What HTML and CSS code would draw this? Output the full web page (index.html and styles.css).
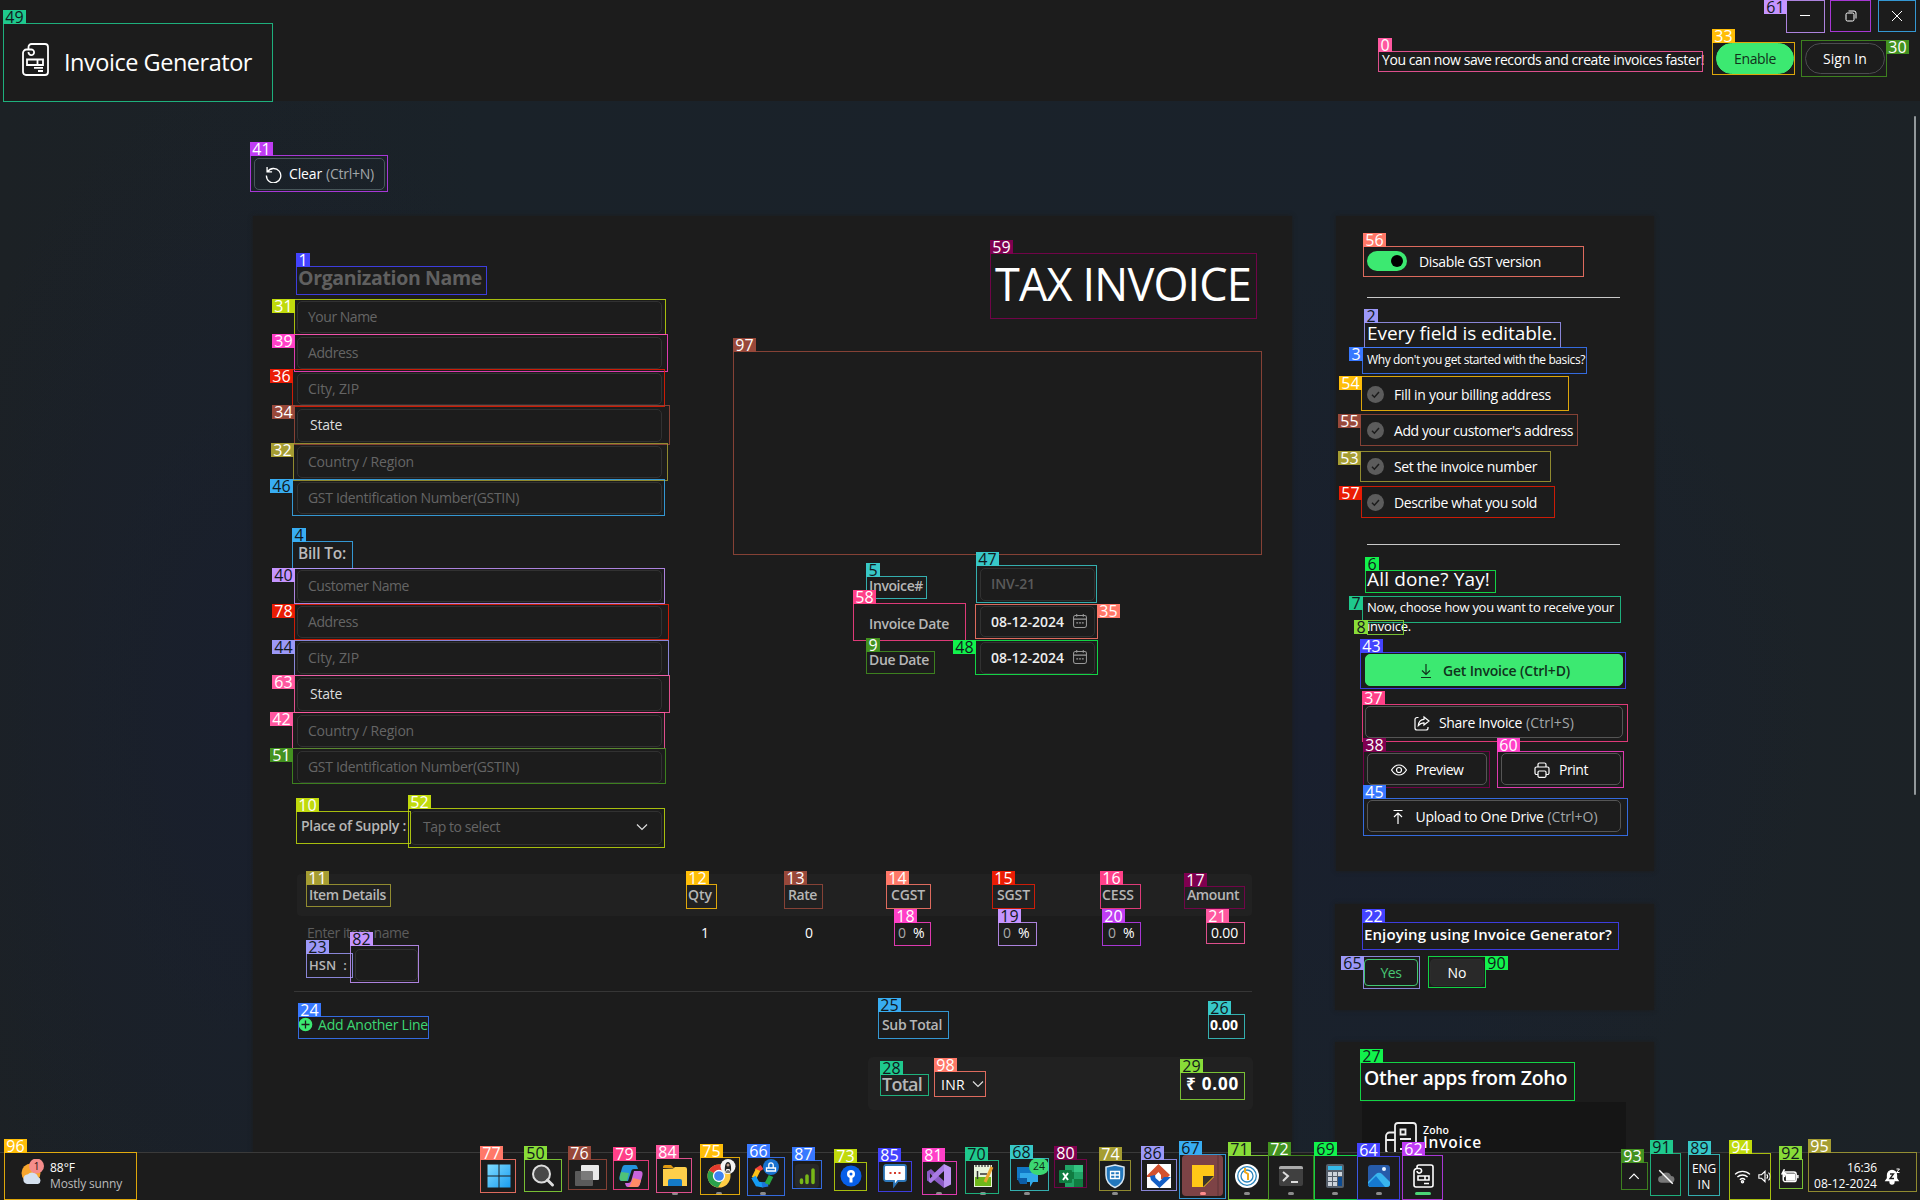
FILE: index.html
```html
<!DOCTYPE html>
<html lang="en">
<head>
<meta charset="utf-8">
<title>Invoice Generator</title>
<link rel="stylesheet" href="styles.css">
</head>
<body>
<header class="header">
  <svg class="logo" viewBox="0 0 27 33" fill="none" stroke="#fff" stroke-width="1.8"><path d="M6.500 7V4a3 3 0 0 1 3-3H23a3 3 0 0 1 3 3v25a3 3 0 0 1-3 3H4a3 3 0 0 1-3-3V10a3.500 3.500 0 0 1 3.500-3.500H9a2.800 2.800 0 1 1-2.500 2.500"/><path d="M5 16.500h16v5.500H5zM15.500 16.500v5.500M12 24.800h9M16 28h5"/></svg>
  <span class="brand" data-width="187">Invoice Generator</span>
  <div class="account">
    <span class="notice" data-width="321">You can now save records and create invoices faster!</span>
    <button class="pill pill-on"><span data-width="41">Enable</span></button>
    <button class="pill"><span data-width="43">Sign In</span></button>
  </div>
  <div class="window-buttons">
    <svg viewBox="0 0 12 12"><path d="M1 5.500h10"/></svg>
    <svg viewBox="0 0 12 12"><rect x="1" y="3" width="8" height="8" rx="1.500"/><path d="M3.500 1H9a2 2 0 0 1 2 2v5.500"/></svg>
    <svg viewBox="0 0 12 12"><path d="M1 1l10 10M11 1L1 11"/></svg>
  </div>
</header>

<main class="workspace">
  <div class="scrollbar"></div>
  <button class="button clear"><svg class="ico" viewBox="0 0 18 18"><path d="M2.200 1v5.300h5.300M2.600 6.300A7.600 7.600 0 1 1 1.500 10"/></svg><span data-width="32">Clear</span><span class="hint" data-width="47">(Ctrl+N)</span></button>
  <div class="columns">
    <section class="paper">
      <div class="upper">
        <div class="party">
          <div class="org"><span data-width="183">Organization Name</span></div>
          <div class="fields">
            <div class="field"><span data-width="68">Your Name</span></div>
            <div class="field"><span data-width="49">Address</span></div>
            <div class="field"><span data-width="50">City, ZIP</span></div>
            <div class="field state"><span data-width="31">State</span></div>
            <div class="field"><span data-width="105">Country / Region</span></div>
            <div class="field"><span data-width="210">GST Identification Number(GSTIN)</span></div>
          </div>
          <div class="bill"><span data-width="47">Bill To:</span></div>
          <div class="fields">
            <div class="field"><span data-width="100">Customer Name</span></div>
            <div class="field"><span data-width="49">Address</span></div>
            <div class="field"><span data-width="50">City, ZIP</span></div>
            <div class="field state"><span data-width="31">State</span></div>
            <div class="field"><span data-width="105">Country / Region</span></div>
            <div class="field"><span data-width="210">GST Identification Number(GSTIN)</span></div>
          </div>
          <div class="supply">
            <span class="label" data-width="104">Place of Supply :</span>
            <div class="select"><span data-width="76">Tap to select</span><svg class="chev" viewBox="0 0 12 8"><path d="M1 1.500l5 5 5-5"/></svg></div>
          </div>
        </div>
        <div class="summary">
          <h1 class="title"><span data-width="255">TAX INVOICE</span></h1>
          <div class="meta">
            <span class="label" data-width="53">Invoice#</span><div class="field number"><span data-width="43">INV-21</span></div>
            <span class="label" data-width="79">Invoice Date</span><div class="field date"><span data-width="72">08-12-2024</span><svg class="cal" viewBox="0 0 15 15"><rect x=".6" y="1.600" width="13.800" height="12.800" rx="2"/><path d="M.6 5.500h13.800M4 0v3M11 0v3M3.500 9.500h2M6.500 9.500h2M9.500 9.500h2"/></svg></div>
            <span class="label" data-width="59">Due Date</span><div class="field date"><span data-width="72">08-12-2024</span><svg class="cal" viewBox="0 0 15 15"><rect x=".6" y="1.600" width="13.800" height="12.800" rx="2"/><path d="M.6 5.500h13.800M4 0v3M11 0v3M3.500 9.500h2M6.500 9.500h2M9.500 9.500h2"/></svg></div>
          </div>
        </div>
      </div>
      <div class="table-head label">
        <span><i data-width="76">Item Details</i></span><span><i data-width="23">Qty</i></span><span><i data-width="28">Rate</i></span><span><i data-width="33">CGST</i></span><span><i data-width="32">SGST</i></span><span><i data-width="31">CESS</i></span><span><i data-width="51">Amount</i></span>
      </div>
      <div class="table-row">
        <span class="muted"><i data-width="101">Enter item name</i></span><span>1</span><span>0</span><span><b>0</b>%</span><span><b>0</b>%</span><span><b>0</b>%</span><span><i data-width="26">0.00</i></span>
      </div>
      <div class="hsn"><span class="label" data-width="37">HSN&nbsp; :</span><div class="field"></div></div>
      <div class="totals">
        <div class="add"><svg viewBox="0 0 15 15"><circle cx="7.500" cy="7.500" r="7.500"/><path d="M7.500 3.500v8M3.500 7.500h8"/></svg><span data-width="109">Add Another Line</span></div>
        <div class="sub label"><span data-width="59">Sub Total</span><strong data-width="27">0.00</strong></div>
      </div>
      <div class="grand">
        <span class="grand-label" data-width="39">Total</span><span class="currency" data-width="23">INR</span><svg class="chev" viewBox="0 0 12 8"><path d="M1 1.500l5 5 5-5"/></svg>
        <strong data-width="52">₹ 0.00</strong>
      </div>
    </section>

    <aside class="side">
      <section class="card guide">
        <div class="gst"><span class="toggle"></span><span data-width="121">Disable GST version</span></div>
        <hr>
        <h2 class="lead"><span data-width="189">Every field is editable.</span></h2>
        <p class="note"><span data-width="217">Why don't you get started with the basics?</span></p>
        <ul class="steps">
          <li><svg viewBox="0 0 17 17"><circle cx="8.500" cy="8.500" r="8.500"/><path d="M5 8.800l2.400 2.400L12 6"/></svg><span data-width="156">Fill in your billing address</span></li>
          <li><svg viewBox="0 0 17 17"><circle cx="8.500" cy="8.500" r="8.500"/><path d="M5 8.800l2.400 2.400L12 6"/></svg><span data-width="178">Add your customer's address</span></li>
          <li><svg viewBox="0 0 17 17"><circle cx="8.500" cy="8.500" r="8.500"/><path d="M5 8.800l2.400 2.400L12 6"/></svg><span data-width="142">Set the invoice number</span></li>
          <li><svg viewBox="0 0 17 17"><circle cx="8.500" cy="8.500" r="8.500"/><path d="M5 8.800l2.400 2.400L12 6"/></svg><span data-width="142">Describe what you sold</span></li>
        </ul>
        <hr>
        <h2 class="lead done"><span data-width="122">All done? Yay!</span></h2>
        <p class="note wrap"><span data-width="246">Now, choose how you want to receive your</span><br><span data-width="43">invoice.</span></p>
        <div class="actions">
          <button class="button primary"><svg class="ico" viewBox="0 0 16 16"><path d="M8 1v10M4 7.500L8 11.500l4-4M3 14.500h10"/></svg><span data-width="126">Get Invoice (Ctrl+D)</span></button>
          <button class="button"><svg class="ico" viewBox="0 0 16 16"><path d="M4.500 2.500H3a2 2 0 0 0-2 2V13a2 2 0 0 0 2 2h9a2 2 0 0 0 2-2v-1M10 2l5 4-5 4V7.800C7.500 7.600 6 8.500 4.300 10.500 4.600 7 6.500 4.600 10 4.300z"/></svg><span data-width="82">Share Invoice</span><span class="hint" data-width="47">(Ctrl+S)</span></button>
          <div class="pair">
            <button class="button"><svg class="ico" viewBox="0 0 16 16"><path d="M.5 8C2.500 4.800 5 3 8 3s5.500 1.800 7.500 5c-2 3.200-4.500 5-7.500 5S2.500 11.200.5 8z"/><circle cx="8" cy="8" r="2.500"/></svg><span data-width="47">Preview</span></button>
            <button class="button"><svg class="ico" viewBox="0 0 16 16"><path d="M4 5V2.500A1.500 1.500 0 0 1 5.500 1h5A1.500 1.500 0 0 1 12 2.500V5M4 12.500H2.500A1.500 1.500 0 0 1 1 11V6.500A1.500 1.500 0 0 1 2.500 5h11A1.500 1.500 0 0 1 15 6.500V11a1.500 1.500 0 0 1-1.500 1.500H12"/><rect x="4" y="9" width="8" height="6.300" rx="1.200"/></svg><span data-width="28">Print</span></button>
          </div>
          <button class="button upload"><svg class="ico" viewBox="0 0 16 16"><path d="M3.500 1.500h9M8 15V4M4 8l4-4 4 4"/></svg><span data-width="127">Upload to One Drive</span><span class="hint" data-width="49">(Ctrl+O)</span></button>
        </div>
      </section>
      <section class="card rate">
        <h3><span data-width="247">Enjoying using Invoice Generator?</span></h3>
        <div class="answers"><button class="yes"><span data-width="20">Yes</span></button><button class="no"><span data-width="18">No</span></button></div>
      </section>
      <section class="card apps">
        <h3><span data-width="202">Other apps from Zoho</span></h3>
        <div class="app">
          <svg viewBox="0 0 32 32" fill="none" stroke="#eee" stroke-width="1.800"><path d="M10 31V4a3 3 0 0 1 3-3h15a3 3 0 0 1 3 3v27zM10 10.500H4.500A3.500 3.500 0 0 0 1 14v14a3 3 0 0 0 3 3h6M1 18h9M15.500 7.500h5v5h-5zM15 17h11M20 22.500h6M15 27h11"/></svg>
          <div><small data-width="25">Zoho</small><strong data-width="58">Invoice</strong></div>
        </div>
      </section>
    </aside>
  </div>
</main>

<footer class="taskbar">
  <div class="weather">
    <svg viewBox="0 0 28 28"><circle cx="13" cy="14" r="9.500" fill="#f7a52c"/><path d="M9 25a5 5 0 0 1 1-9.800 6 6 0 0 1 10 2.800 3.700 3.700 0 0 1 0 7z" fill="#d5e1ef"/><circle cx="18.500" cy="7" r="7.500" fill="#f58d8b"/><text x="18.500" y="11" text-anchor="middle">1</text></svg>
    <div><span data-width="24">88°F</span><em data-width="71">Mostly sunny</em></div>
  </div>
  <nav class="apps-row">
    <span><svg viewBox="0 0 24 24"><defs><linearGradient id="win" x2="1" y2="1"><stop stop-color="#7fdcff"/><stop offset="1" stop-color="#1a9df0"/></linearGradient></defs><path fill="url(#win)" d="M.5.500h11v11H.5zM12.500.500h11v11h-11zM.5 12.500h11v11H.5zM12.500 12.500h11v11h-11z"/></svg></span>
    <span><svg viewBox="0 0 24 24"><circle cx="10.500" cy="10" r="8.500" fill="#484848" stroke="#ddd" stroke-width="2"/><path d="M16.500 16l5 5" stroke="#ddd" stroke-width="3" stroke-linecap="round"/></svg></span>
    <span><svg viewBox="0 0 24 24"><rect x="6" y="1" width="18" height="15" rx="1" fill="#e8e8e8"/><rect y="7" width="18" height="15" rx="1" fill="#666" fill-opacity=".85"/></svg></span>
    <span><svg viewBox="0 0 24 24"><path fill="#2392dc" d="M6 1h10c2 0 2.500 2 3 4h-4c-2 0-2.500 1-3 3L9 17H3c-3 0-3-3-2-6l2-7c.6-2 1.500-3 3-3z"/><path fill="#4fc276" d="M2 8l8 1-2 8H3c-3 0-2.500-4-1-9z"/><path fill="#c965dc" d="M18 23H9c-2 0-2.500-2-3-4h3c2 0 3-1 3.500-3L15 7h6c3 0 3 3 2 6l-2 7c-.6 2-1.500 3-3 3z"/><path fill="#ff8b66" d="M22 16l-8-2-2 5c-.5 2-1.500 3-3 4h9c2 0 3-3 4-7z"/></svg></span>
    <span class="open"><svg viewBox="0 0 24 24"><path fill="#e29a12" d="M0 3a2 2 0 0 1 2-2h6l3 3H0z"/><path fill="#ffcf4a" d="M0 5l10-.500L12 3h10a2 2 0 0 1 2 2v17H0z"/><path fill="#147ac6" d="M5 17a2 2 0 0 1 2-2h10a2 2 0 0 1 2 2v5H5z"/></svg></span>
    <span class="open"><svg viewBox="0 0 24 24"><circle cx="12" cy="12" r="11.500" fill="#fc4"/><path fill="#e33b2e" d="M12 12L2 6.400A11.500 11.500 0 0 1 22 6.400H12z"/><path fill="#2ba24c" d="M12 12L2 6.400A11.500 11.500 0 0 0 11 23.500l5.500-9z"/><circle cx="12" cy="12" r="5.500" fill="#3f83f1" stroke="#fff" stroke-width="1.300"/><circle cx="21" cy="2.500" r="7.500" fill="#f4f4f4"/><path d="M18 8c-.5-4 0-10 3-10s3.500 6 3 10l-1.500-3h-3z" fill="#222"/><circle cx="21" cy="1" r="1.500" fill="#b98"/><path d="M18.500 9c.5-4 4.500-4 5 0z" fill="#777"/></svg></span>
    <span class="open"><svg viewBox="0 0 24 24" fill="none" stroke-width="5"><path stroke="#f5423a" d="M5 7l6-4"/><path stroke="#fbc216" d="M3 14l4-8"/><path stroke="#159cf3" d="M2.500 13l4 7 6 1"/><path stroke="#1b73d9" d="M11 21l6-1"/><path stroke="#27a843" d="M16 20l4-8"/><circle cx="20" cy="3" r="8" fill="#1972cf"/><path stroke="#fff" stroke-width="1.300" d="M15.500 7V4h9v3zM17.800 4V1a2 2 0 0 1 4.400 0v3"/></svg></span>
    <span><svg viewBox="0 0 24 24"><rect width="24" height="24" rx="4" fill="#282828"/><path d="M6.500 18.500v-2.500M12 18.500v-6.500M18 18.500V6" stroke="#78b817" stroke-width="3.500" stroke-linecap="round"/></svg></span>
    <span><svg viewBox="0 0 24 24"><circle cx="12" cy="12" r="10.500" fill="#075fe9"/><circle cx="12" cy="10" r="4" fill="#fff"/><path fill="#fff" d="M10.500 12h3v6.500h-3z"/><circle cx="12" cy="10" r="1.500" fill="#075fe9"/></svg></span>
    <span><svg viewBox="0 0 24 24"><path fill="#fff" stroke="#2d77b9" stroke-width="1.800" d="M3 1h18a2 2 0 0 1 2 2v12a2 2 0 0 1-2 2h-6l-4 5v-5H3a2 2 0 0 1-2-2V3a2 2 0 0 1 2-2z"/><path d="M6.500 9h2M11 9h2M15.500 9h2" stroke="#d43a2a" stroke-width="2"/></svg></span>
    <span class="open"><svg viewBox="0 0 24 24"><path fill="#8b5bc5" d="M0 7.500L4 5l13 12V24L4.500 14 4 19l-4-2.500z"/><path fill="#a87be4" d="M17 0v7L4 19l-2-1V14z"/><path fill="#bc95f3" d="M17 0l7 3.500v17L17 24z"/><path fill="#1c1c1c" d="M17 8v8l-4.500-4zM3 9.500v5L5.500 12z"/></svg></span>
    <span class="open"><svg viewBox="0 0 24 24"><path fill="#e9f5dc" d="M3 1h18v22H3z"/><path fill="#6eb71b" d="M4 13h16v9H4z"/><path stroke="#333" stroke-width="1.500" d="M6.500 7v8M9 10h7"/><path stroke="#555" stroke-width="1.500" d="M4 2h16" stroke-dasharray="2 1"/><path stroke="#e9a630" stroke-width="3" d="M21 3l-7 15"/></svg></span>
    <span class="open"><svg viewBox="0 0 24 24"><path fill="#1177c5" d="M2 3h16v13H2z"/><path fill="#31a8e8" d="M5 9h18v9h-5l-3 5v-5H5z"/><path fill="#0c5da7" d="M2 14h10v6H5z"/></svg><u>24</u></span>
    <span><svg viewBox="0 0 24 24"><path fill="#21a366" d="M6 1h18v22H6z"/><path fill="#107c41" d="M6 8h9v7H6zM15 15h9v8h-9z"/><path fill="#33c481" d="M15 1h9v7h-9z"/><rect y="6" width="13" height="13" rx="1" fill="#107c41"/><path stroke="#fff" stroke-width="2" d="M4 9l5 7M9 9l-5 7"/></svg></span>
    <span class="open"><svg viewBox="0 0 24 24"><path fill="#2277bd" stroke="#d8e7f3" stroke-width="1.500" d="M12 1l9 2v8c0 6-3 10-9 12.500C6 21 3 17 3 11V3z"/><path d="M7.500 7.500h9v7h-9zM7.500 11h9M12 7.500v7" fill="none" stroke="#fff" stroke-width="1.300"/></svg></span>
    <span><svg viewBox="0 0 24 24"><path fill="#fff" d="M0 0h24v24H0z"/><path fill="#d3512f" d="M0 11.500L11.500 0 23 11l-4 4h-5V11l-2.500-3-5 5H0z"/><path fill="#145fc5" d="M24 13L12.500 24 4 16l-1-4 5-1 .5 3 4 3.500 4.500-4.500z"/></svg></span>
    <span class="open notes"><svg viewBox="0 0 24 24"><path fill="#ffc817" d="M1 1h22v12L13 23H1z"/><path fill="#38342b" d="M12 23V12h11z"/></svg></span>
    <span class="open"><svg viewBox="0 0 24 24"><circle cx="12" cy="12" r="12" fill="#fff"/><circle cx="12" cy="12" r="9.300" fill="none" stroke="#2b86bd" stroke-width="1.300"/><circle cx="12" cy="12" r="6" fill="none" stroke="#2b86bd" stroke-width="1.300"/><path fill="none" stroke="#efa91a" stroke-width="2" d="M10 4v4l3 2v6"/></svg></span>
    <span class="open"><svg viewBox="0 0 24 24"><rect y="2" width="24" height="20" rx="2" fill="#404040"/><path fill="#aaa" d="M0 4a2 2 0 0 1 2-2h20a2 2 0 0 1 2 2v1H0z"/><path fill="none" stroke="#ddd" stroke-width="2" d="M4 8l5 4-5 5M12 18h7"/></svg></span>
    <span class="open"><svg viewBox="0 0 24 24"><rect x="3" width="18" height="24" rx="2" fill="#555f6a"/><path fill="#35b9e9" d="M5 2h14v4H5z"/><path fill="#cdd4da" d="M5 8h4v4H5zM10 8h4v4h-4zM15 8h4v4h-4zM5 13h4v4H5zM10 13h4v4h-4zM5 18h4v4H5zM10 18h4v4h-4z"/><path fill="#0c4b91" d="M15 13h4v9h-4z"/></svg></span>
    <span class="open"><svg viewBox="0 0 24 24"><rect x="1" y="1" width="22" height="22" rx="3" fill="#265ba9"/><path fill="#38b5ee" d="M1 18l8-8a4 4 0 0 1 6 0l8 8v2a3 3 0 0 1-3 3H4a3 3 0 0 1-3-3z"/><path fill="#1578cf" d="M1 20l8-8 9 11H4a3 3 0 0 1-3-3z"/><circle cx="17" cy="5" r="2" fill="#e9f5ff"/></svg></span>
    <span class="open current"><svg viewBox="0 0 24 24" fill="none" stroke="#fff" stroke-width="1.600"><path d="M6 5V3a2 2 0 0 1 2-2h12a2 2 0 0 1 2 2v18a2 2 0 0 1-2 2H5a2 2 0 0 1-2-2V7.500a3 3 0 0 1 3-3h2A2.300 2.300 0 1 1 6 7M7 12h11v4H7zM14 12v4M13 19.500h5"/></svg></span>
  </nav>
  <div class="tray">
    <svg class="t1" viewBox="0 0 16 16"><path d="M3 10.500l5-5 5 5"/></svg>
    <svg class="t2" viewBox="0 0 16 16"><path d="M4 13a3 3 0 0 1 0-6 4.500 4.500 0 0 1 8.500 0A3 3 0 0 1 12.500 13z" fill="#777" stroke="none"/><path d="M2 2l12 12"/></svg>
    <div class="lang"><span data-width="23">ENG</span><span data-width="12">IN</span></div>
    <svg class="t3" viewBox="0 0 16 16"><path d="M1 6a10 10 0 0 1 14 0M3.200 8.500a7 7 0 0 1 9.600 0M5.500 11a3.800 3.800 0 0 1 5 0"/><circle cx="8" cy="13" r="1"/></svg>
    <svg class="t4" viewBox="0 0 16 16"><path d="M1 6h3l4-4v12l-4-4H1zM10 5.500a4 4 0 0 1 0 5M12 3.500a6 6 0 0 1 0 9"/></svg>
    <svg class="t5" viewBox="0 0 16 16"><rect x="2" y="4.500" width="11.500" height="8.500" rx="2"/><path d="M15 7v3"/><path fill="#fff" d="M5 6.500h7v5H5zM3 2L1 6h3L3 9"/></svg>
    <div class="clock"><span data-width="29">16:36</span><span data-width="62">08-12-2024</span></div>
    <svg class="t6" viewBox="0 0 16 16"><path fill="#fff" d="M2 12.500l1.500-2V7a4.500 4.500 0 0 1 9 0v3.500l1.500 2zM6 14h4a2 2 0 0 1-4 0z"/><path stroke="#1c1c1c" d="M6 6h3.500L6 10.500h4"/><path stroke-width="1" d="M12.500 1h3l-3 3.500h3"/></svg>
  </div>
</footer>

<div class="marks" id="marks"></div>
<script src="script.js"></script>
</body>
</html>
```
FILE: styles.css
```css
* { box-sizing: border-box; }
body {
  margin: 0; width: 1920px; height: 1200px; overflow: hidden; position: relative;
  display: flex; flex-direction: column;
  background: #1c1c1c; color: #fff;
  font: 14px/20px "Open Sans", "Noto Sans", sans-serif;
}
h1, h2, h3, p, ul { margin: 0; padding: 0; font-weight: 400; }
i, em { font-style: normal; }
svg { flex: none; display: block; }
[data-width] { white-space: pre; display: inline-block; }
button { font: inherit; color: inherit; background: none; padding: 0; margin: 0; }

.header { height: 101px; flex: none; display: flex; padding-left: 22px; position: relative; }
.logo { width: 27px; height: 33px; margin-top: 43px; }
.brand { font-size: 23.5px; line-height: 32px; margin: 46px 0 0 15px; }
.account { display: flex; margin: 43px 35px 0 auto; }
.notice { margin: 7px 12px 0 0; line-height: 20px; }
.pill { width: 80px; height: 31px; border: 1px solid #4c4c50; border-radius: 16px; margin-left: 11px; line-height: 28px; }
.pill-on { width: 78px; background: #3ce971; border-color: #3ce971; color: #12301c; margin-left: 0; }
.window-buttons { position: absolute; top: 10px; right: 17px; display: flex; gap: 34px; }
.window-buttons svg { width: 12px; height: 12px; fill: none; stroke: #fff; stroke-width: 1; }

.workspace {
  flex: 1; min-height: 0; overflow: hidden; position: relative; padding: 57px 0 0 253px;
  background:
    radial-gradient(ellipse 500px 450px at 1320px 620px, #191f2e 0, #191f2e00 100%),
    radial-gradient(ellipse 330px 650px at 250px 620px, #191f2d 0, #191f2d00 100%),
    linear-gradient(90deg, #1c2125, #1a2229 25%, #1a222b 75%, #1c2226);
}
.scrollbar { position: absolute; right: 4px; top: 15px; width: 2px; height: 679px; background: #92989b; border-radius: 1px; }
.button { display: flex; align-items: center; justify-content: center; height: 32px; border: 1px solid #555; border-radius: 5px; line-height: 20px; }
.actions .button { padding-top: 1px; }
.ico { width: 16px; height: 16px; fill: none; stroke: currentColor; stroke-width: 1.2; margin-right: 9px; }
.hint { color: #a2a6a8; margin-left: 4px; }
.clear { width: 131px; margin-left: 1px; border-color: #48575a; }
.clear .ico { margin-right: 7px; stroke-width: 1.4; width: 17px; height: 17px; }
.columns { display: flex; margin-top: 26px; align-items: flex-start; }
.paper { width: 1039px; height: 1100px; background: #1c1c1c; box-shadow: 0 0 4px #1c1c1c; padding: 50px 40px 0 44px; }
.upper { display: flex; }
.party { width: 365px; }
.org { height: 35px; line-height: 24px; font-size: 19.5px; font-weight: 700; color: #606060; padding-left: 1px; }
.fields { display: flex; flex-direction: column; gap: 4px; }
.field { height: 32px; border: 1px solid #313131; border-radius: 5px; padding: 4px 10px 0; color: #656565; line-height: 22px; }
.state { height: 33px; padding-left: 12px; color: #ddd; }
.bill { height: 56px; padding-top: 27px; line-height: 24px; font-size: 15.5px; font-weight: 600; color: #bbb; padding-left: 1px; }
.label { font-weight: 600; color: #b6b6b6; font-size: 14px; }
.supply { margin-top: 28px; display: flex; }
.supply .label { margin: 4px auto 0 4px; line-height: 22px; flex: none; }
.select { width: 252px; height: 34px; border: 1px solid #313131; border-radius: 5px; display: flex; align-items: center; justify-content: space-between; padding: 0 13px 2px 12px; color: #656565; }
.chev { width: 12px; height: 8px; fill: none; stroke: #ddd; stroke-width: 1.2; }
.summary { flex: 1; padding-left: 207px; }
.title { font-size: 45px; line-height: 38px; text-align: right; padding-right: 1px; margin-top: -1px; }
.title span { white-space: nowrap; }
.meta { margin-top: 265px; display: grid; grid-template-columns: 111px 115px; grid-template-rows: 33px 31px 32px; row-gap: 5px; justify-content: start; }
.meta .label { line-height: 22px; margin-top: 7px; justify-self: start; }
.number { height: 33px; font-weight: 600; color: #5a5a5a; }
.date { height: auto; display: flex; justify-content: space-between; padding: 0 7px 0 10px; align-items: center; color: #eee; font-weight: 600; font-size: 14px; }
.cal { width: 14px; height: 14px; fill: none; stroke: #999; stroke-width: 1.1; margin-top: -2px; }
.table-head { height: 42px; margin: 29px 0 0; background: #212121; border-radius: 4px; padding-left: 12px; display: grid; grid-template-columns: 379px 100px 103px 106px 105px 85px 1fr; line-height: 42px; }
.table-row { height: 33px; padding-left: 10px; display: grid; grid-template-columns: 394px 104px 93px 105px 105px 103px 1fr; line-height: 34px; }
.table-row b { font-weight: 400; color: #aaa; display: inline-block; width: 15px; }
.muted { color: #5c5c5c; }
.hsn { height: 43px; display: flex; padding-left: 12px; margin: 0 0 0 -3px; border-bottom: 1px solid #363636; }
.hsn .label { margin: 6px 8px 0 3px; font-size: 13px; }
.hsn .field { width: 63px; }
.totals { display: flex; height: 65px; padding-top: 23px; }
.add { color: #3cd872; display: flex; width: 585px; gap: 5px; }
.add svg { width: 15px; height: 15px; margin: 2px 0 0 1px; fill: #3ce971; stroke: #1c1c1c; stroke-width: 1.3; }
.sub { flex: 1; display: flex; justify-content: space-between; padding-right: 14px; }
.sub strong, .grand strong { color: #fff; font-weight: 700; }
.grand { width: 385px; height: 53px; margin-left: 571px; background: #212121; border-radius: 5px; padding: 0 14px 0 14px; display: flex; align-items: center; }
.grand-label { font-size: 18px; font-weight: 600; color: #b6b6b6; }
.currency { margin: 2px 7px 0 19px; }
.grand .chev { margin-right: auto; }
.grand strong { font-size: 17px; }

.side { width: 318px; margin-left: 44px; display: flex; flex-direction: column; }
.card { background: #1c1c1c; box-shadow: 0 0 4px #1c1c1c; padding-left: 29px; margin-left: -1px; }
.guide { height: 655px; padding: 35px 30px 0 31px; margin-left: 0; }
.gst { display: flex; gap: 12px; height: 46px; }
.gst span:last-child { line-height: 22px; }
.toggle { width: 40px; height: 20px; border-radius: 10px; background: #3ce971; display: flex; align-items: center; justify-content: flex-end; padding-right: 4px; }
.toggle::after { content: ""; width: 12px; height: 12px; border-radius: 6px; background: #000; }
hr { border: 0; height: 1px; background: #c8c8c8; margin: 0; width: 253px; }
.lead { font-size: 19px; line-height: 28px; padding-top: 21px; }
.note { font-size: 12px; line-height: 18px; padding-top: 4px; height: 38px; }
.steps { list-style: none; height: 159px; padding-top: 1px; }
.steps li { height: 36px; display: flex; gap: 10px; line-height: 17px; }
.steps svg { width: 17px; height: 17px; fill: #5c5c5c; }
.steps path { fill: none; stroke: #1c1c1c; stroke-width: 1.5; }
.done { padding-top: 20px; }
.wrap { font-size: 13px; padding-top: 5px; height: 61px; line-height: 18.5px; }
.actions { margin: 0 -2px; display: flex; flex-direction: column; }
.primary { background: #3ce971; border-color: #3ce971; color: #10321c; font-weight: 600; margin-bottom: 20px; width: 258px; }
.actions > .button:nth-child(2) { width: 258px; }
.pair { display: flex; gap: 14px; margin: 15px 2px; }
.pair .button { width: 120px; }
.upload { margin: 0 2px; width: 254px; }
.rate { height: 106px; margin-top: 33px; }
.rate h3 { font-size: 15px; font-weight: 600; padding-top: 20px; line-height: 20px; }
.answers { display: flex; gap: 12px; margin-top: 15px; }
.answers button { width: 54px; height: 27px; border: 1px solid #2c2c2c; background: #292929; border-radius: 4px; line-height: 24px; }
.answers .yes { background: none; border-color: #42c873; color: #48c774; }
.apps { margin-top: 32px; height: 200px; }
.apps h3 { font-size: 19.5px; font-weight: 600; line-height: 28px; padding-top: 22px; }
.app { background: #151515; margin: 10px 28px 0 -2px; height: 100px; padding: 20px 0 0 23px; display: flex; gap: 6px; }
.app svg { width: 32px; height: 32px; }
.app div { display: flex; flex-direction: column; align-items: flex-start; }
.app small { font-size: 10.5px; line-height: 14px; font-weight: 600; margin-top: 1px; }
.app strong { font-size: 15.5px; line-height: 15px; font-weight: 600; margin-top: -2px; }

.taskbar { height: 48px; flex: none; border-top: 1px solid #3a3a3a; background: #1c1c1c; display: flex; font-size: 12px; line-height: 16px; }
.weather { width: 477px; padding: 4px 0 0 18px; display: flex; gap: 4px; }
.weather svg { width: 28px; height: 28px; margin-top: 2px; }
.weather text { font-size: 10px; fill: #2a1010; }
.weather div { display: flex; flex-direction: column; padding-top: 3px; align-items: flex-start; }
.weather em { color: #bbb; }
.apps-row { display: flex; }
.apps-row span { width: 44px; height: 47px; display: flex; justify-content: center; padding-top: 11px; position: relative; }
.apps-row svg { width: 24px; height: 24px; overflow: visible; }
.open::after { content: ""; position: absolute; top: 39px; left: 19px; width: 6px; height: 3px; border-radius: 2px; background: #8b8b8b; }
.current::after { background: #4bd575; width: 16px; left: 14px; }
.notes::before { content: ""; position: absolute; left: 1px; top: 2px; width: 41px; height: 41px; border-radius: 4px; background: linear-gradient(90deg, #7d4346 35px, #5c3336 36px, #7d4346 37px); }
.notes svg { position: relative; }
.notes::after { background: #ff8c8c; }
.apps-row u { position: absolute; left: 24px; top: 5px; width: 20px; height: 17px; border-radius: 9px; background: #3cd872; color: #0d2a17; text-decoration: none; font-size: 10.5px; line-height: 17px; text-align: center; }
.tray { display: flex; flex: 1; padding-left: 181px; }
.tray svg { width: 15px; height: 15px; margin-top: 16px; fill: none; stroke: #fff; stroke-width: 1.3; }
.tray .t1 { width: 16px; }
.tray .t2 { width: 18px; margin: 15px 0 0 15px; height: 18px; }
.lang { width: 24px; margin: 8px 0 0 17px; display: flex; flex-direction: column; align-items: center; }
.tray .t3 { margin-left: 18px; width: 17px; height: 17px; margin-top: 15px; }
.tray .t4 { margin-left: 7px; width: 14px; }
.tray .t5 { margin-left: 9px; width: 18px; height: 18px; margin-top: 14px; }
.clock { width: 64px; margin: 7px 0 0 14px; display: flex; flex-direction: column; align-items: flex-end; }
.tray .t6 { margin-left: 7px; width: 16px; height: 18px; margin-top: 14px; }

.marks { position: absolute; inset: 0; pointer-events: none; overflow: hidden; }
.mark { position: absolute; border: 1px solid var(--c); opacity: .85; }
.tag { position: absolute; height: 14px; width: 23px; background: var(--c); color: #fff; font: 16px/14px "Open Sans", sans-serif; text-align: center; }
.tag.single { width: 14px; }
.tag.dark { color: #10181c; }
```
FILE: script.js
```js
// Stretch each caption to the width it has in the product's own typeface.
for (const el of document.querySelectorAll('[data-width]')) {
  const natural = el.getBoundingClientRect().width;
  const gap = (Number(el.dataset.width) + 1 - natural) / el.textContent.length;
  el.style.letterSpacing = gap.toFixed(3) + 'px';
}

// Element markers: number, left, top, right, bottom, colour, tag side (t/l/r), dark tag text.
const P = {
  teal: '#1fc98d', violet: '#c03cf4', blue: '#4343ff', lime: '#c0da0c', magenta: '#ff40c8',
  red: '#ea1c04', brown: '#98483a', olive: '#a59d32', sky: '#38adf2', lilac: '#c594ff',
  peri: '#9c98f8', pink: '#ff58a0', rose: '#ff4088', forest: '#439220', plum: '#7f0050',
  cyan: '#38c8c8', coral: '#ff7868', green: '#12f24c', amber: '#ffbe08', azure: '#3878ff', grass: '#88dc38'
};
const marks = [
  [49,3,23,273,102,'teal','t',1],[41,250,155,388,192,'violet','t'],[1,296,266,487,295,'blue','t'],
  [31,294,299,666,335,'lime','l'],[39,294,334,668,372,'magenta','l'],[36,292,369,665,407,'red','l'],
  [34,294,405,670,445,'brown','l'],[32,293,443,668,481,'olive','l'],[46,292,479,665,516,'sky','l',1],
  [4,292,541,353,569,'sky','t',1],[40,294,568,665,604,'lilac','l',1],[78,294,604,669,640,'red','l'],
  [44,294,640,669,676,'peri','l',1],[63,294,675,670,713,'pink','l'],[42,292,712,665,749,'pink','l'],
  [51,292,748,666,784,'forest','l'],[10,296,811,411,844,'lime','t'],[52,408,808,665,848,'lime','t'],
  [59,990,253,1257,319,'plum','t'],[97,733,351,1262,555,'brown','t'],[47,976,565,1097,603,'cyan','t',1],
  [5,866,576,927,599,'cyan','t',1],[58,853,603,966,641,'rose','t'],[35,975,604,1098,639,'coral','r'],
  [9,866,651,935,674,'forest','t'],[48,975,640,1098,675,'green','l',1],[0,1378,51,1703,72,'pink','t'],
  [33,1712,42,1795,75,'amber','t'],[30,1801,40,1887,77,'forest','r'],[61,1786,0,1825,33,'lilac','l',1],
  ['',1830,0,1871,32,'violet'],['',1878,0,1916,32,'sky'],[56,1363,246,1584,277,'coral','t'],
  [2,1364,322,1561,348,'peri','t',1],[3,1362,347,1587,374,'azure','l'],[54,1361,376,1569,411,'amber','l'],
  [55,1360,414,1578,446,'brown','l'],[53,1360,451,1551,482,'olive','l'],[57,1361,486,1555,518,'red','l'],
  [6,1365,570,1496,593,'green','t',1],[7,1362,596,1621,623,'teal','l',1],[8,1367,620,1404,635,'grass','l',1],
  [43,1360,652,1626,689,'blue','t'],[37,1362,704,1628,742,'rose','t'],[38,1363,751,1490,788,'plum','t'],
  [60,1497,751,1624,788,'magenta','t'],[45,1363,798,1628,836,'azure','t'],[22,1362,922,1619,950,'blue','t'],
  [65,1363,956,1420,989,'peri','l',1],[90,1428,956,1486,988,'green','r',1],[27,1360,1062,1575,1101,'green','t',1],
  [11,306,884,391,907,'olive','t'],[12,686,884,717,909,'amber','t'],[13,784,884,823,909,'brown','t'],
  [14,886,884,931,909,'coral','t'],[15,992,884,1035,909,'red','t'],[16,1100,884,1141,909,'rose','t'],
  [17,1184,886,1245,909,'plum','t'],[18,894,922,931,946,'magenta','t'],[19,998,922,1037,946,'lilac','t',1],
  [20,1102,922,1141,946,'violet','t'],[21,1206,922,1245,944,'pink','t'],[23,306,953,353,978,'peri','t',1],
  [82,350,945,419,983,'lilac','t',1],[24,298,1016,429,1039,'azure','t'],[25,878,1011,949,1039,'sky','t',1],
  [26,1208,1014,1245,1039,'cyan','t',1],[28,880,1074,929,1096,'teal','t',1],[98,934,1071,986,1097,'coral','t'],
  [29,1180,1072,1245,1100,'grass','t',1],
  [96,4,1152,137,1200,'amber','t'],[77,480,1159,516,1193,'coral','t'],[50,524,1159,562,1192,'grass','t',1],
  [76,568,1159,607,1190,'brown','t'],[79,613,1160,649,1190,'rose','t'],[84,656,1158,692,1193,'pink','t'],
  [75,700,1157,740,1195,'amber','t'],[66,747,1157,785,1196,'azure','t'],[87,792,1160,822,1189,'azure','t'],
  [73,834,1162,867,1191,'lime','t'],[85,878,1161,912,1192,'blue','t'],[81,922,1161,957,1195,'magenta','t'],
  [70,965,1160,999,1194,'teal','t',1],[68,1010,1158,1049,1191,'cyan','t',1],[80,1054,1159,1087,1188,'plum','t'],
  [74,1099,1160,1131,1191,'olive','t'],[86,1141,1159,1177,1191,'peri','t',1],[67,1179,1154,1226,1199,'sky','t',1],
  [71,1228,1155,1269,1200,'grass','t',1],[72,1268,1155,1314,1200,'forest','t'],[69,1314,1155,1358,1200,'green','t',1],
  [64,1357,1156,1400,1200,'blue','t'],[62,1402,1155,1443,1200,'violet','t'],[93,1621,1162,1648,1190,'forest','t'],
  [91,1650,1153,1681,1196,'teal','t',1],[89,1688,1154,1720,1196,'cyan','t',1],[94,1729,1153,1771,1200,'lime','t'],
  [92,1779,1159,1803,1189,'grass','t',1],[95,1808,1152,1917,1192,'olive','t']
];
const layer = document.getElementById('marks');
for (const [id, left, top, right, bottom, color, side, dark] of marks) {
  const box = document.createElement('div');
  box.className = 'mark';
  box.style.cssText = `--c:${P[color]};left:${left}px;top:${top}px;width:${right - left}px;height:${bottom - top}px`;
  layer.append(box);
  if (!side) continue;
  const tag = document.createElement('div');
  const w = id < 10 ? 14 : 23;
  tag.className = 'tag' + (id < 10 ? ' single' : '') + (dark ? ' dark' : '');
  const x = side === 'l' ? left - w + 1 : side === 'r' ? right - 1 : left;
  tag.style.cssText = `--c:${P[color]};left:${x}px;top:${side === 't' ? top - 13 : top}px`;
  tag.textContent = id;
  layer.append(tag);
}
```
